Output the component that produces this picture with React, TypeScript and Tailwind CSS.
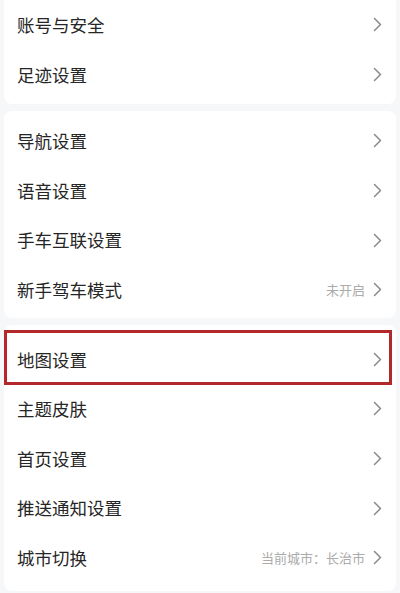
import React from 'react';

type Item = { label: string; value?: string; marked?: boolean };

const groups: { items: Item[]; className: string }[] = [
  {
    className: 'pt-0 pb-[5px]',
    items: [{ label: '账号与安全' }, { label: '足迹设置' }],
  },
  {
    className: 'pt-[5px] pb-[3px]',
    items: [
      { label: '导航设置' },
      { label: '语音设置' },
      { label: '手车互联设置' },
      { label: '新手驾车模式', value: '未开启' },
    ],
  },
  {
    className: 'pt-[10px] pb-2',
    items: [
      { label: '地图设置', marked: true },
      { label: '主题皮肤' },
      { label: '首页设置' },
      { label: '推送通知设置' },
      { label: '城市切换', value: '当前城市：长治市' },
    ],
  },
];

const Chevron = () => (
  <svg width="9" height="15" viewBox="0 0 9 15" className="shrink-0">
    <polyline points="1.5,1.5 7.5,7.5 1.5,13.5" fill="none" stroke="#8a8a8a" strokeWidth="1.5" strokeLinejoin="round" strokeLinecap="round" />
  </svg>
);

const SettingRow = ({ label, value, marked }: Item) => (
  <div className="relative h-[49.6px] flex items-center justify-between pl-[13px] pr-[14px]">
    <span className="text-[17.5px] text-[#262626] leading-none">{label}</span>
    <div className="flex items-center gap-[8px]">
      {value && <span className="text-[13px] text-[#ababab] leading-none">{value}</span>}
      <Chevron />
    </div>
    {/* highlight frame around the map settings entry */}
    {marked && (
      <div className="absolute -top-[5px] -bottom-[1px] left-0 right-[4px] border-[3px] border-[#b3282b] pointer-events-none" />
    )}
  </div>
);

export default function App() {
  return (
    <div
      className="w-[400px] h-[593px] overflow-hidden bg-[#f6f7f9] px-[4px] flex flex-col"
      style={{ fontFamily: '"Noto Sans CJK SC", "Noto Sans", sans-serif' }}
    >
      {groups.map((g, gi) => (
        <div
          key={gi}
          className={`bg-white rounded-[8px] shrink-0 ${g.className} ${gi === 0 ? 'rounded-t-none' : 'mt-[7px]'}`}
        >
          {g.items.map((it) => (
            <SettingRow key={it.label} {...it} />
          ))}
        </div>
      ))}
    </div>
  );
}
